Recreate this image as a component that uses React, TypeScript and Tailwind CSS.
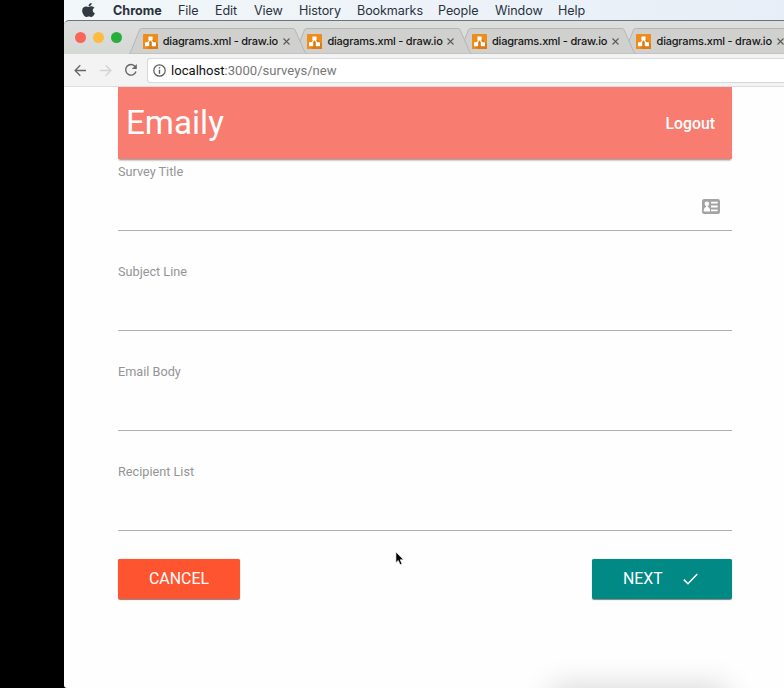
import React from "react";

const menus = [
  { label: "File", cls: "w-[37px]" },
  { label: "Edit", cls: "w-[39px]" },
  { label: "View", cls: "w-[45px]" },
  { label: "History", cls: "w-[58px]" },
  { label: "Bookmarks", cls: "w-[81px]" },
  { label: "People", cls: "w-[57px]" },
  { label: "Window", cls: "w-[63px]" },
  { label: "Help", cls: "w-[40px]" },
];

function MenuBar() {
  return (
    <div className="flex h-5 items-center bg-linear-to-r from-[#f2f7f9] to-[#e7eef7] pl-[18px] font-[Inter,sans-serif] text-[12.6px] leading-5 text-[#29323c]">
      <svg className="mt-[-1px] h-[16px] w-[13px] shrink-0" viewBox="0 0 384 512" fill="#343a42" preserveAspectRatio="none">
        <path d="M318.7 268.7c-.2-36.7 16.4-64.4 50-84.8-18.8-26.9-47.2-41.7-84.7-44.6-35.5-2.8-74.3 20.7-88.5 20.7-15 0-49.4-19.7-76.4-19.7C63.3 141.2 4 184.8 4 273.5q0 39.3 14.4 81.2c12.8 36.7 59 126.7 107.2 125.2 25.2-.6 43-17.9 75.8-17.9 31.8 0 48.3 17.9 76.4 17.9 48.6-.7 90.4-82.5 102.6-119.3-65.2-30.7-61.7-90-61.7-91.9zm-56.6-164.2c27.3-32.4 24.8-61.9 24-72.5-24.1 1.4-52 16.4-67.9 34.9-17.5 19.8-27.8 44.3-25.6 71.9 26.1 2 49.9-11.4 69.5-34.3z" />
      </svg>
      <span className="ml-[18px] w-[65px] shrink-0 whitespace-nowrap pt-px font-bold">Chrome</span>
      {menus.map((m) => (
        <span key={m.label} className={"shrink-0 whitespace-nowrap pt-px tracking-[-0.1px] " + m.cls}>
          {m.label}
        </span>
      ))}
    </div>
  );
}

function DrawIoIcon() {
  return (
    <svg className="h-[15px] w-[15px] shrink-0" viewBox="0 0 15 15">
      <rect width="15" height="15" rx="0.6" fill="#ee8d1a" />
      <path d="M9 4l6 6v5H6L3 12z" fill="#de7a10" />
      <path d="M7.5 5L4.3 10M7.5 5l3.2 5" stroke="#fff" strokeWidth="1.3" />
      <rect x="5.4" y="2.4" width="4.2" height="3.9" rx=".5" fill="#fff" />
      <rect x="2" y="8.3" width="4.2" height="3.9" rx=".5" fill="#fff" />
      <rect x="8.8" y="8.3" width="4.2" height="3.9" rx=".5" fill="#fff" />
    </svg>
  );
}

function Tab({ layer }: { layer: string }) {
  return (
    <div className={"relative mr-[-13.4px] flex h-[26px] w-[178px] shrink-0 items-center pl-[13.6px] " + layer}>
      <svg className="absolute inset-0 h-[26px] w-[178px]" viewBox="0 0 178 26">
        <path d="M0 26L1.5 24.5L10.5 1.8Q11 .5 12.500 .5H164Q165.500 .5 166 1.800L176 24.500L178 26Z" fill="#d0d1cf" stroke="#b4b7b6" strokeWidth="1" />
      </svg>
      <div className="relative flex items-center">
        <DrawIoIcon />
        <span className="ml-[5.2px] w-[120px] whitespace-nowrap font-[Inter,sans-serif] text-[11px] font-medium leading-[15px] tracking-[-0.22px] text-[#151515]">
          diagrams.xml - draw.io
        </span>
        <svg className="h-[7px] w-[7px]" viewBox="0 0 7 7" stroke="#5a5a5a" strokeWidth="1.1">
          <path d="M.5.5l6 6M6.5.5l-6 6" />
        </svg>
      </div>
    </div>
  );
}

function TabStrip() {
  return (
    <div className="flex h-[34px] items-end rounded-tl-[5px] border-t border-[#6d7476] bg-linear-to-b from-[#dcdfdd] to-[#d6d8d6]">
      <div className="flex h-[33px] w-[65px] shrink-0 items-center gap-[7px] pl-[10.5px]">
        <span className="h-[11px] w-[11px] rounded-full bg-[#fb6558]" />
        <span className="h-[11px] w-[11px] rounded-full bg-[#fdbc40]" />
        <span className="h-[11px] w-[11px] rounded-full bg-[#27ae3b]" />
      </div>
      <Tab layer="z-40" />
      <Tab layer="z-30" />
      <Tab layer="z-20" />
      <Tab layer="z-10" />
    </div>
  );
}

function Toolbar() {
  return (
    <div className="flex h-[33px] items-center border-b border-[#dedede] bg-[#f3f3f3]">
      <svg className="ml-[10px] h-[13px] w-[13px] shrink-0" viewBox="0 0 13 13" fill="none" stroke="#666" strokeWidth="1.3">
        <path d="M12 6.5H1.2M6.3 1.3L1.1 6.5l5.2 5.2" />
      </svg>
      <svg className="ml-3 h-[13px] w-[13px] shrink-0" viewBox="0 0 13 13" fill="none" stroke="#d2d2d2" strokeWidth="1.3">
        <path d="M.8 6.5h11M6.7 1.3l5.2 5.2-5.2 5.2" />
      </svg>
      <svg className="ml-3 h-[14px] w-[14px] shrink-0" viewBox="0 0 14 14" fill="none" stroke="#666" strokeWidth="1.4">
        <path d="M11.2 3.6A5.3 5.3 0 1 0 12 8.6" />
        <path d="M12.8 1v5H7.8z" fill="#666" stroke="none" />
      </svg>
      <div className="ml-[9px] flex h-[25px] flex-1 items-center rounded-l-[3px] border border-r-0 border-[#d9d9d9] bg-white pl-[5px]">
        <svg className="h-[13px] w-[13px]" viewBox="0 0 13 13" fill="none" stroke="#5a5a5a" strokeWidth="1.2">
          <circle cx="6.5" cy="6.5" r="5.7" />
          <path d="M6.5 5.7v4M6.5 3.2v1.4" strokeWidth="1.4" />
        </svg>
        <span className="ml-[5px] whitespace-nowrap pt-px font-[Roboto,sans-serif] text-[13.1px] leading-5 text-[#777]">
          <span className="text-[#111]">localhost</span>:3000/surveys/new
        </span>
      </div>
    </div>
  );
}

function ContactIcon() {
  return (
    <svg className="mr-[12px] h-[15px] w-[18px]" viewBox="0 0 18 15">
      <rect width="18" height="15" rx="2.2" fill="#a3a3a3" />
      <circle cx="4.9" cy="4.7" r="2.3" fill="#fff" />
      <path d="M4 6h1.8v2c1.5.4 2.3 1.8 2.3 4.4H1.7C1.7 9.8 2.5 8.4 4 8z" fill="#fff" />
      <path d="M9 3.7h6.7M9 7.5h6.7M9 11.3h6.7" stroke="#fff" strokeWidth="1.8" />
    </svg>
  );
}

function Field({ label, contact = false }: { label: string; contact?: boolean }) {
  return (
    <div className="h-[100px]">
      <label className="block h-[23px] pt-[2px] text-[12.7px] leading-[20px] text-[#959595]">{label}</label>
      <div className="flex h-[48px] items-center justify-end border-b border-[#aeaeae]">{contact && <ContactIcon />}</div>
    </div>
  );
}

export default function App() {
  return (
    <div className="h-[688px] w-[784px] overflow-hidden bg-black pl-16 font-[Roboto,sans-serif]">
      <div className="relative flex h-full flex-col overflow-hidden rounded-bl-[3px] bg-[#fefefe]">
        <MenuBar />
        <TabStrip />
        <Toolbar />
        <main className="ml-[54px] w-[614px]">
          <nav className="mb-px flex h-[72px] items-center justify-between bg-[#f87c70] pr-[17px] pl-2 text-white shadow-[0_2px_2px_-1px_rgba(0,0,0,0.5)]">
            <span className="text-[33.2px] leading-[72px]">Emaily</span>
            <span className="pt-px text-[15.8px] font-medium">Logout</span>
          </nav>
          <form>
            <Field label="Survey Title" contact />
            <Field label="Subject Line" />
            <Field label="Email Body" />
            <Field label="Recipient List" />
            <div className="mt-[-1px] flex justify-between">
              <button type="button" className="h-[40px] w-[122px] rounded-[2px] bg-[#ff5430] text-[15.9px] text-white shadow-[0_0.5px_1px_rgba(0,0,0,0.5)]">
                CANCEL
              </button>
              <button type="button" className="flex h-[40px] w-[140px] items-center rounded-[2px] bg-[#008985] pl-[31px] text-[15.9px] text-white shadow-[0_0.5px_1px_rgba(0,0,0,0.5)]">
                NEXT
                <svg className="ml-[20px] h-[12px] w-[15px]" viewBox="0 0 15 12" fill="none" stroke="#fff" strokeWidth="1.5">
                  <path d="M.8 6.6L5 10.8 14.3 1" />
                </svg>
              </button>
            </div>
          </form>
        </main>
        <svg className="absolute top-[551px] left-[331px] h-[16px] w-[10px]" viewBox="0 0 11 17">
          <path d="M1 .8v11.7l2.6-2.4 2 4.7 2.1-.9-2-4.6h3.7z" fill="#000" stroke="#fff" strokeWidth=".7" />
        </svg>
        <div className="absolute top-[692px] left-[490px] h-5 w-[170px] rounded-full shadow-[0_0_30px_6px_rgba(0,0,0,0.16)]" />
      </div>
    </div>
  );
}
